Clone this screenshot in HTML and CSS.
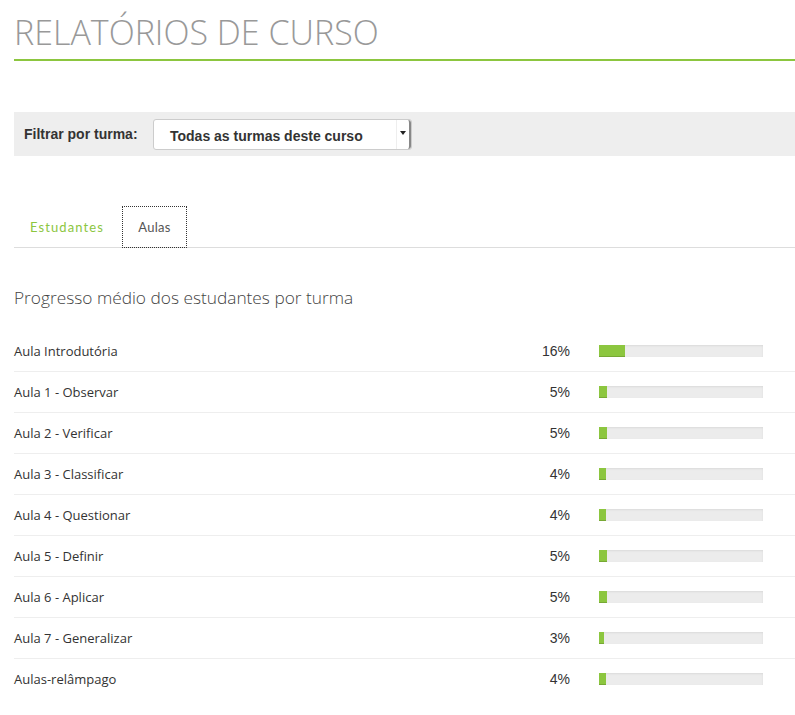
FILE: index.html
```html
<!DOCTYPE html>
<html lang="pt">
<head>
<meta charset="utf-8">
<link rel="stylesheet" href="styles.css">
</head>
<body>
<div class="page">
  <h1 class="title">RELATÓRIOS DE CURSO</h1>
  <div class="filter">
    <span class="filter-label">Filtrar por turma:</span>
    <div class="select">
      <span class="select-text">Todas as turmas deste curso</span>
      <span class="select-arrow"></span>
    </div>
  </div>
  <div class="tabs">
    <span class="tab">Estudantes</span>
    <span class="tab active">Aulas</span>
  </div>
  <h2 class="subtitle">Progresso médio dos estudantes por turma</h2>
  <div class="rows">
    <div class="row"><span class="name">Aula Introdutória</span><span class="pct">16%</span><div class="bar"><div class="fill" style="width:16%"></div></div></div>
    <div class="row"><span class="name">Aula 1 - Observar</span><span class="pct">5%</span><div class="bar"><div class="fill" style="width:5%"></div></div></div>
    <div class="row"><span class="name">Aula 2 - Verificar</span><span class="pct">5%</span><div class="bar"><div class="fill" style="width:5%"></div></div></div>
    <div class="row"><span class="name">Aula 3 - Classificar</span><span class="pct">4%</span><div class="bar"><div class="fill" style="width:4%"></div></div></div>
    <div class="row"><span class="name">Aula 4 - Questionar</span><span class="pct">4%</span><div class="bar"><div class="fill" style="width:4%"></div></div></div>
    <div class="row"><span class="name">Aula 5 - Definir</span><span class="pct">5%</span><div class="bar"><div class="fill" style="width:5%"></div></div></div>
    <div class="row"><span class="name">Aula 6 - Aplicar</span><span class="pct">5%</span><div class="bar"><div class="fill" style="width:5%"></div></div></div>
    <div class="row"><span class="name">Aula 7 - Generalizar</span><span class="pct">3%</span><div class="bar"><div class="fill" style="width:3%"></div></div></div>
    <div class="row last"><span class="name">Aulas-relâmpago</span><span class="pct">4%</span><div class="bar"><div class="fill" style="width:4%"></div></div></div>
  </div>
</div>
</body>
</html>
```
FILE: styles.css
```css
html, body {
  margin: 0;
  padding: 0;
  background: #fff;
}
.page {
  padding-left: 14px;
  font-family: "Open Sans", "Liberation Sans", sans-serif;
  color: #333;
}
.title {
  margin: 0;
  padding-top: 9px;
  height: 50px;
  font-weight: 300;
  font-size: 34px;
  line-height: 46px;
  color: #999;
  border-bottom: 2px solid #8cc63f;
  box-sizing: content-box;
}
.filter {
  margin-top: 51px;
  height: 44px;
  background: #eee;
  display: flex;
  align-items: center;
  padding-left: 10px;
}
.filter-label {
  font-family: "Liberation Sans", Arial, sans-serif;
  font-weight: bold;
  font-size: 14px;
  color: #333;
  width: 129px;
}
.select {
  width: 257px;
  height: 29px;
  margin-top: 1px;
  background: #fff;
  border: 1px solid #ccc;
  border-radius: 3px;
  display: flex;
  align-items: center;
  position: relative;
}
.select-text {
  font-family: "Liberation Sans", Arial, sans-serif;
  font-weight: bold;
  font-size: 14px;
  color: #333;
  padding-left: 16px;
  padding-top: 2px;
  flex: 1;
}
.select-arrow {
  width: 12px;
  height: 29px;
  border-left: 1px solid #eee;
  border-right: 2px solid #888;
  position: relative;
  border-radius: 0 3px 3px 0;
}
.select-arrow::after {
  content: "";
  position: absolute;
  left: 3px;
  top: 11px;
  border-left: 3px solid transparent;
  border-right: 3px solid transparent;
  border-top: 4px solid #222;
}
.tabs {
  margin-top: 50px;
  height: 41px;
  border-bottom: 1px solid #ddd;
  display: flex;
  align-items: stretch;
}
.tab {
  font-family: "Lato", "Open Sans", sans-serif;
  font-size: 13px;
  letter-spacing: 1.1px;
  color: #8cc63f;
  padding: 0 16px;
  display: flex;
  align-items: center;
  box-sizing: border-box;
}
.tab.active {
  color: #555;
  border: 1px dotted #333;
  width: 65px;
  justify-content: center;
  padding: 0;
  margin-left: 2px;
  height: 42px;
  letter-spacing: 0.3px;
}
.subtitle {
  margin: 37px 0 0;
  font-weight: 300;
  font-size: 17.3px;
  line-height: 26px;
  color: #444;
}
.rows {
  margin-top: 20px;
}
.row {
  height: 41px;
  border-bottom: 1px solid #eee;
  display: flex;
  align-items: center;
  box-sizing: border-box;
}
.row.last {
  border-bottom-color: transparent;
}
.name {
  font-size: 13px;
  color: #333;
  width: 500px;
}
.pct {
  font-family: "Liberation Sans", Arial, sans-serif;
  font-size: 14px;
  color: #333;
  width: 56px;
  text-align: right;
}
.bar {
  margin-left: 29px;
  width: 164px;
  height: 12px;
  background: #ececec;
  box-shadow: inset 0 1px 2px rgba(0,0,0,0.08);
}
.fill {
  height: 100%;
  background: #8cc63f;
  box-shadow: inset 0 -1px 0 rgba(0,0,0,0.15);
}
```
